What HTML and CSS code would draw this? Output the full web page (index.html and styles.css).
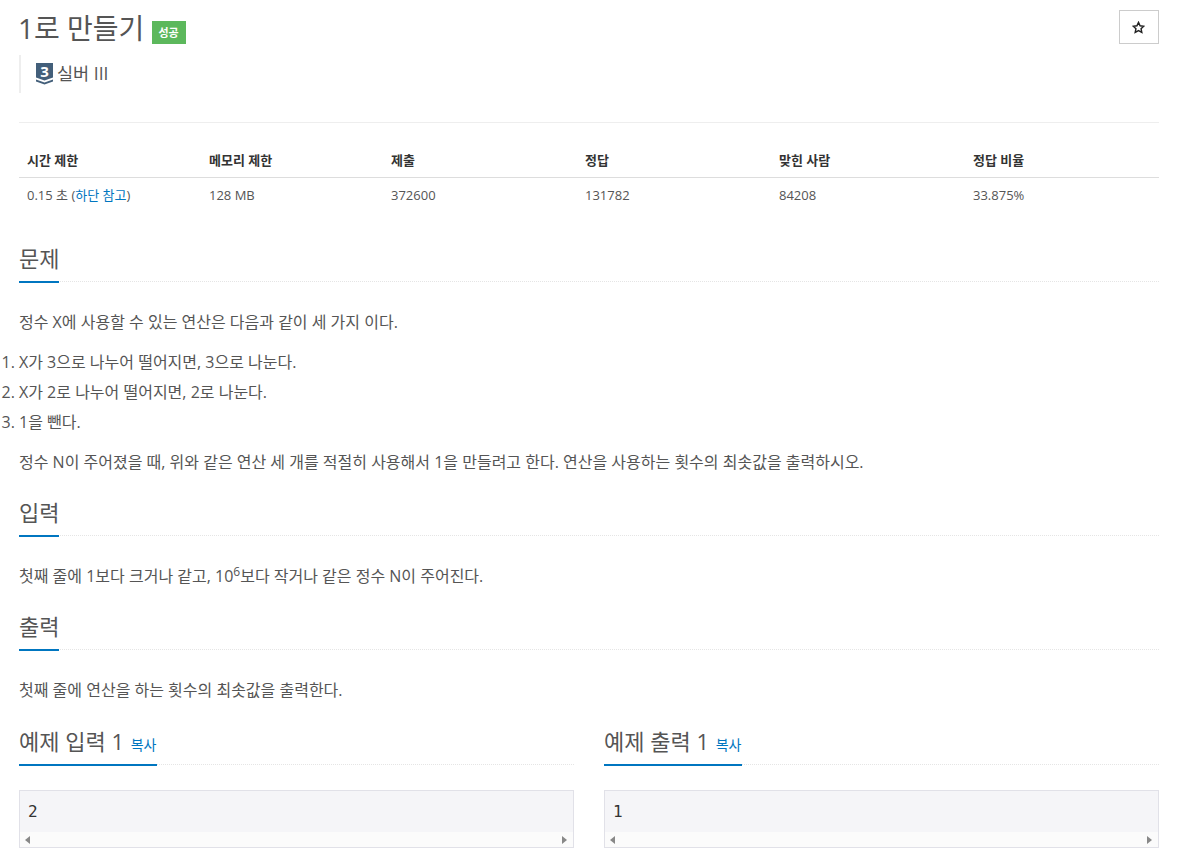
FILE: index.html
```html
<!DOCTYPE html>
<html lang="ko">
<head>
<meta charset="utf-8">
<title>1로 만들기</title>
<link rel="stylesheet" href="styles.css">
</head>
<body>
<main class="page">
  <header class="title-row">
    <h1 class="title">1로 만들기 <span class="badge">성공</span></h1>
    <button class="star-btn" type="button" aria-label="즐겨찾기">
      <svg width="13" height="13" viewBox="0 0 24 24"><path d="M12 2.5l2.9 6.3 6.9.8-5.1 4.7 1.4 6.8-6.1-3.4-6.1 3.4 1.4-6.8-5.1-4.7 6.9-.8z" fill="none" stroke="#222" stroke-width="2.6" stroke-linejoin="miter"/></svg>
    </button>
  </header>
  <div class="tier">
    <span class="tier-badge">
      <svg class="tier-icon" width="17" height="22" viewBox="0 0 17 22"><path d="M0 0h17v14.5l-8.5 3-8.5-3z" fill="#435f7a"/><path d="M0 16.5l8.5 3 8.5-3v2l-8.5 3-8.5-3z" fill="#435f7a"/></svg>
      <span class="tier-num">3</span>
    </span>
    <span class="tier-name">실버 III</span>
  </div>
  <hr class="divider">
  <table class="info">
    <thead>
      <tr><th class="c1">시간 제한</th><th class="c2">메모리 제한</th><th class="c3">제출</th><th class="c4">정답</th><th class="c5">맞힌 사람</th><th>정답 비율</th></tr>
    </thead>
    <tbody>
      <tr><td>0.15 초 (<a href="#">하단 참고</a>)</td><td>128 MB</td><td>372600</td><td>131782</td><td>84208</td><td>33.875%</td></tr>
    </tbody>
  </table>

  <section class="section first">
    <div class="headline"><h2>문제</h2></div>
    <p>정수 X에 사용할 수 있는 연산은 다음과 같이 세 가지 이다.</p>
    <ol>
      <li>X가 3으로 나누어 떨어지면, 3으로 나눈다.</li>
      <li>X가 2로 나누어 떨어지면, 2로 나눈다.</li>
      <li>1을 뺀다.</li>
    </ol>
    <p>정수 N이 주어졌을 때, 위와 같은 연산 세 개를 적절히 사용해서 1을 만들려고 한다. 연산을 사용하는 횟수의 최솟값을 출력하시오.</p>
  </section>

  <section class="section">
    <div class="headline"><h2>입력</h2></div>
    <p>첫째 줄에 1보다 크거나 같고, 10<sup>6</sup>보다 작거나 같은 정수 N이 주어진다.</p>
  </section>

  <section class="section">
    <div class="headline"><h2>출력</h2></div>
    <p>첫째 줄에 연산을 하는 횟수의 최솟값을 출력한다.</p>
  </section>

  <div class="samples">
    <section class="sample">
      <div class="headline"><h2>예제 입력 1 <a class="copy" href="#">복사</a></h2></div>
      <div class="pre-box"><pre>2</pre><div class="scrollbar"><i class="arrow left"></i><i class="arrow right"></i></div></div>
    </section>
    <section class="sample">
      <div class="headline"><h2>예제 출력 1 <a class="copy" href="#">복사</a></h2></div>
      <div class="pre-box"><pre>1</pre><div class="scrollbar"><i class="arrow left"></i><i class="arrow right"></i></div></div>
    </section>
  </div>
</main>
</body>
</html>
```
FILE: styles.css
```css
* { box-sizing: border-box; }
html, body { margin: 0; padding: 0; height: 100%; overflow: hidden; }
body {
  background: #fff;
  color: #555;
  font-family: "Open Sans", "Noto Sans CJK KR", sans-serif;
  font-size: 16px;
  line-height: 24px;
}
a { color: #0076c0; text-decoration: none; }
.page { padding: 0 19px; }
.title-row { display: flex; justify-content: space-between; align-items: flex-start; padding-top: 10px; }
.title { margin: 0 0 0 -1px; font-size: 28px; font-weight: 400; line-height: 36px; color: #555; }
.badge {
  display: inline-block;
  background: #5cb85c;
  color: #fff;
  font-size: 11px;
  font-weight: 700;
  line-height: 23px;
  height: 23px;
  width: 34px;
  text-align: center;
  vertical-align: 2px;
}
.star-btn {
  width: 40px;
  height: 34px;
  padding: 0 2px 0 0;
  background: #fff;
  border: 1px solid #ccc;
  display: flex;
  align-items: center;
  justify-content: center;
}
.tier {
  display: flex;
  align-items: center;
  gap: 4px;
  margin-top: 9px;
  height: 38px;
  padding-left: 15px;
  border-left: 2px solid #eee;
  font-size: 17.5px;
  color: #555;
}
.tier-name { margin-bottom: 2px; }
.tier-badge { position: relative; flex: none; width: 17px; height: 22px; display: block; }
.tier-icon { display: block; }
.tier-num {
  position: absolute;
  left: 0;
  top: 0;
  width: 17px;
  height: 17px;
  text-align: center;
  font-size: 15px;
  line-height: 17px;
  font-weight: 700;
  color: #fff;
}
.divider { border: 0; border-top: 1px solid #eee; margin: 29px 0 0; height: 1px; }
.info { width: 100%; border-collapse: separate; border-spacing: 0; table-layout: fixed; margin-top: 20px; font-size: 13px; line-height: 18px; }
.info th { text-align: left; font-weight: 700; padding: 8px; height: 35px; border-bottom: 1px solid #ddd; color: #333; }
.info td { padding: 7px 8px 9px; height: 35px; color: #555; }
.c1 { width: 182px; } .c2 { width: 182px; } .c3 { width: 194px; } .c4 { width: 194px; } .c5 { width: 194px; }
.section { margin-top: 25px; }
.section.first { margin-top: 32px; }
.headline { border-bottom: 1px dotted #e5e5e5; height: 37px; }
.headline h2 {
  display: inline-block;
  margin: 0;
  height: 38px;
  font-size: 22px;
  font-weight: 400;
  line-height: 26px;
  color: #555;
  border-bottom: 2px solid #0076c0;
}
.section p { margin: 0; padding-top: 28px; line-height: 24px; }
.section ol + p { padding-top: 13px; }
ol { margin: 13px 0 0; padding: 0; line-height: 30px; }
sup { line-height: 0; font-size: 12px; }
.samples { display: grid; grid-template-columns: 1fr 1fr; gap: 30px; margin-top: 26px; }
.sample .headline h2 { padding-right: 1px; }
.copy { font-size: 14px; margin-left: 1px; }
.pre-box { margin-top: 25px; border: 1px solid #e1e1e8; background: #f5f5f8; height: 58px; }
.pre-box pre {
  margin: 0;
  height: 41px;
  padding: 10px 8px;
  font-family: "DejaVu Sans Mono", monospace;
  font-size: 16px;
  line-height: 22px;
  color: #333;
}
.scrollbar { height: 15px; background: #fbfbfb; display: flex; justify-content: space-between; align-items: center; padding: 0 6px 0 5px; }
.arrow { width: 0; height: 0; border-top: 4.5px solid transparent; border-bottom: 4.5px solid transparent; }
.arrow.left { border-right: 5px solid #888; }
.arrow.right { border-left: 5px solid #888; }
```
